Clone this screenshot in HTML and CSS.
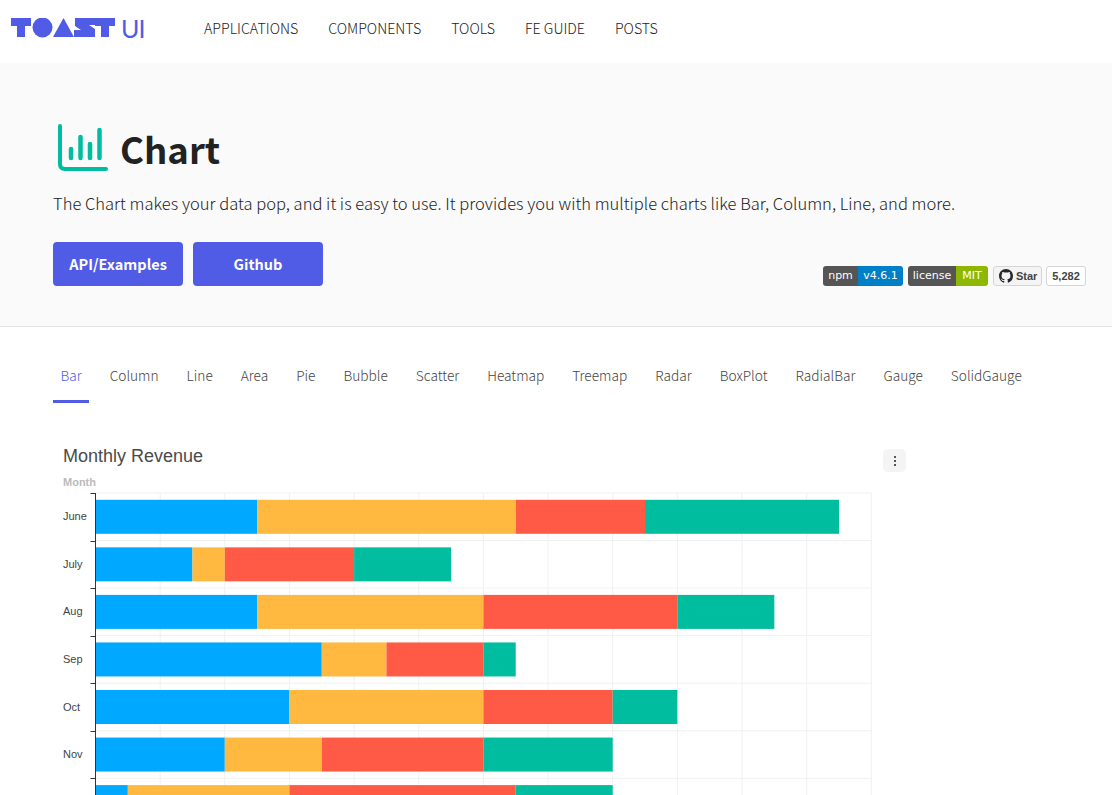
FILE: index.html
```html
<!DOCTYPE html>
<html>
<head>
	<meta charset="utf-8">
	<meta name="viewport" content="width=device-width, initial-scale=1">
	<title>TOAST UI Chart</title>
	<link rel="stylesheet" href="styles.css">
</head>
<body>
	<!-- Header -->
	<header class="header">
		<a class="logo" href="#">
			<svg class="logo-mark" width="105" height="20" viewBox="0 0 105 20">
				<path d="M0 0H20V8H14V19H6V8H0Z"/>
				<circle cx="31.5" cy="9.5" r="10"/>
				<path d="M42 19L52.5 0L63 19Z"/>
				<path d="M64 0H84V7H78L84 11V19H63V12H70L64 8Z"/>
				<path d="M84 0H104V8H98V19H90V8H84Z"/>
			</svg>
			<span class="logo-ui">UI</span>
		</a>
		<nav class="nav">
			<a href="#">APPLICATIONS</a>
			<a href="#">COMPONENTS</a>
			<a href="#">TOOLS</a>
			<a href="#">FE GUIDE</a>
			<a href="#">POSTS</a>
		</nav>
	</header>

	<!-- Hero -->
	<section class="hero">
		<div class="hero-title">
			<svg class="hero-icon" width="52" height="50" viewBox="0 0 52 50" fill="none" stroke="#00bd9f" stroke-linecap="round">
				<path d="M3 3V41Q3 46 8 46H49" stroke-width="4"/>
				<path d="M14 26V35M23.5 14V35M33 21V35M42.5 7V35" stroke-width="4.5"/>
			</svg>
			<h1>Chart</h1>
		</div>
		<p class="hero-desc">The Chart makes your data pop, and it is easy to use. It provides you with multiple charts like Bar, Column, Line, and more.</p>
		<div class="hero-bottom">
			<div class="hero-btns">
				<a class="btn" href="#">API/Examples</a>
				<a class="btn" href="#">Github</a>
			</div>
			<div class="badges">
				<span class="badge"><span class="badge-key key-npm">npm</span><span class="badge-val blue">v4.6.1</span></span>
				<span class="badge"><span class="badge-key key-license">license</span><span class="badge-val green">MIT</span></span>
				<span class="star-btn">
					<svg width="14" height="14" viewBox="0 0 16 16"><path fill="#24292e" d="M8 0C3.58 0 0 3.58 0 8c0 3.54 2.29 6.53 5.47 7.59.4.07.55-.17.55-.38 0-.19-.01-.82-.01-1.49-2.01.37-2.53-.49-2.69-.94-.09-.23-.48-.94-.82-1.13-.28-.15-.68-.52-.01-.53.63-.01 1.08.58 1.23.82.72 1.21 1.87.87 2.33.66.07-.52.28-.87.51-1.07-1.78-.2-3.64-.89-3.64-3.95 0-.87.31-1.59.82-2.15-.08-.2-.36-1.02.08-2.12 0 0 .67-.21 2.2.82.64-.18 1.32-.27 2-.27s1.36.09 2 .27c1.53-1.04 2.2-.82 2.2-.82.44 1.1.16 1.92.08 2.12.51.56.82 1.27.82 2.15 0 3.07-1.87 3.75-3.65 3.95.29.25.54.73.54 1.48 0 1.07-.01 1.93-.01 2.2 0 .21.15.46.55.38A8.01 8.01 0 0 0 16 8c0-4.42-3.58-8-8-8z"/></svg>
					Star
				</span>
				<span class="star-count">5,282</span>
			</div>
		</div>
	</section>

	<!-- Tabs -->
	<ul class="tabs">
		<li class="tab active">Bar</li>
		<li class="tab">Column</li>
		<li class="tab">Line</li>
		<li class="tab">Area</li>
		<li class="tab">Pie</li>
		<li class="tab">Bubble</li>
		<li class="tab">Scatter</li>
		<li class="tab">Heatmap</li>
		<li class="tab">Treemap</li>
		<li class="tab">Radar</li>
		<li class="tab">BoxPlot</li>
		<li class="tab">RadialBar</li>
		<li class="tab">Gauge</li>
		<li class="tab">SolidGauge</li>
	</ul>

	<!-- Chart -->
	<section class="chart">
		<div class="chart-head">
			<h2 class="chart-title">Monthly Revenue</h2>
			<button class="chart-menu"><i></i><i></i><i></i></button>
		</div>
		<svg id="plot" class="plot" width="830" height="340" viewBox="0 0 830 340"></svg>
	</section>

	<script src="chart.js"></script>
</body>
</html>
```

FILE: styles.css
```css
* {
	box-sizing: border-box;
}

html, body {
	height: 100%;
	overflow: hidden;
}

body {
	margin: 0;
	background: #fff;
	color: #222;
	font-family: "Noto Sans CJK KR", "Noto Sans", sans-serif;
}

a {
	color: inherit;
	text-decoration: none;
}

/* Header */
.header {
	display: flex;
	align-items: center;
	height: 63px;
	padding: 0 0 7px 11px;
}

.logo {
	display: flex;
	align-items: center;
	width: 193px;
}

.logo-mark {
	fill: #515ce6;
}

.logo-ui {
	margin-left: 5px;
	color: #515ce6;
	font-family: "Lato", sans-serif;
	font-size: 25px;
	letter-spacing: -1px;
	line-height: 20px;
}

.nav {
	display: flex;
	gap: 30px;
	font-size: 14.2px;
	font-weight: 300;
	color: #222;
}

/* Hero */
.hero {
	height: 264px;
	padding: 60px 26px 0 53px;
	background: #fafafa;
	border-bottom: 1px solid #e4e4e4;
}

.hero-title {
	display: flex;
	align-items: center;
	gap: 11px;
	height: 50px;
	padding-left: 4px;
}

.hero-title h1 {
	margin: 2px 0 0;
	font-size: 36.5px;
	font-weight: 700;
	line-height: 50px;
	color: #222;
}

.hero-desc {
	margin: 18px 0 0;
	font-size: 16.5px;
	font-weight: 300;
	letter-spacing: 0.02px;
	line-height: 24px;
	color: #222;
}

.hero-bottom {
	display: flex;
	justify-content: space-between;
	align-items: flex-end;
	margin-top: 27px;
}

.hero-btns {
	display: flex;
	gap: 10px;
}

.btn {
	width: 130px;
	height: 44px;
	background: #515ce6;
	border-radius: 4px;
	color: #fff;
	font-size: 14.5px;
	font-weight: 700;
	line-height: 44px;
	text-align: center;
}

.badges {
	display: flex;
	gap: 5px;
	height: 20px;
	font-family: "DejaVu Sans", sans-serif;
	font-size: 11px;
	line-height: 20px;
}

.badge {
	display: flex;
	width: 80px;
	border-radius: 3px;
	overflow: hidden;
	color: #fff;
	text-align: center;
}

.badge-key {
	background: #555;
}

.key-npm {
	width: 35px;
}

.key-license {
	width: 48px;
}

.badge-val {
	flex: 1;
}

.blue {
	background: #007ec6;
}

.green {
	background: #8eb800;
}

.star-btn, .star-count {
	display: flex;
	align-items: center;
	border: 1px solid #d5d5d5;
	border-radius: 3px;
	color: #444;
	font-family: "Liberation Sans", sans-serif;
	font-weight: 700;
}

.star-btn {
	gap: 3px;
	width: 49px;
	padding-left: 5px;
	background: #f4f4f4;
}

.star-count {
	justify-content: center;
	width: 40px;
	margin-left: -1px;
	background: #fff;
}

/* Tabs */
.tabs {
	display: flex;
	gap: 13px;
	margin: 22px 0 0 53px;
	padding: 0;
	list-style: none;
}

.tab {
	height: 54px;
	padding: 0 7.5px;
	font-size: 13.7px;
	font-weight: 300;
	line-height: 52px;
	color: #444;
}

.tab.active {
	color: #515ce6;
	border-bottom: 3px solid #515ce6;
}

/* Chart */
.chart {
	margin: 41px 0 0 53px;
}

.chart-head {
	display: flex;
	justify-content: space-between;
	align-items: flex-start;
	width: 853px;
	height: 24px;
	padding-left: 10px;
}

.chart-title {
	margin: 0;
	font-family: "Liberation Sans", Arial, sans-serif;
	font-size: 18px;
	font-weight: 400;
	line-height: 24px;
	color: #4a4a4a;
}

.chart-menu {
	display: flex;
	flex-direction: column;
	justify-content: center;
	align-items: center;
	flex-shrink: 0;
	gap: 2px;
	width: 23px;
	height: 23px;
	margin-top: 5px;
	padding: 0;
	background: #f4f4f4;
	border: 0;
	border-radius: 5px;
}

.chart-menu i {
	width: 2px;
	height: 2px;
	background: #555;
}

.plot {
	display: block;
	margin-top: 1px;
	font-family: "Liberation Sans", Arial, sans-serif;
}

.axis-name {
	font-size: 11px;
	font-weight: 700;
	fill: #bbb;
}

.axis-label {
	font-size: 11px;
	fill: #444;
}
```

FILE: chart.js
```js
/* Bar values in grid steps: blue, orange, red, green */
const months = [
	{name: 'June', vals: [2.5, 4, 2, 3]},
	{name: 'July', vals: [1.5, 0.5, 2, 1.5]},
	{name: 'Aug', vals: [2.5, 3.5, 3, 1.5]},
	{name: 'Sep', vals: [3.5, 1, 1.5, 0.5]},
	{name: 'Oct', vals: [3, 3, 2, 1]},
	{name: 'Nov', vals: [2, 1.5, 2.5, 2]},
	{name: 'Dec', vals: [0.5, 2.5, 3.5, 1.5]},
];
const colors = ['#00a9ff', '#ffb840', '#ff5a46', '#00bd9f'];

const plot = document.querySelector('#plot');
const axisX = 42.5, plotY = 24, step = 64.65, rowH = 47.55, barH = 34;
const plotEnd = 340;
let html = '<text class="axis-name" x="10" y="17">Month</text>';

/* Grid */
for (let i = 1; i <= 12; i++) {
	let x = axisX + step * i;
	html += `<line x1="${x}" x2="${x}" y1="${plotY}" y2="${plotEnd}" stroke="#f0f0f0"/>`;
}
for (let i = 0; i <= 6; i++) {
	let y = plotY + rowH * i;
	html += `<line x1="${axisX}" x2="${axisX + step * 12}" y1="${y}" y2="${y}" stroke="#f0f0f0"/>`;
}

/* Bars */
months.forEach(function(month, i) {
	let y = plotY + rowH * i + 6.8;
	let x = axisX;
	month.vals.forEach(function(val, j) {
		let w = val * step;
		html += `<rect x="${x}" y="${y}" width="${w}" height="${barH}" fill="${colors[j]}"/>`;
		x += w;
	});
	if (i < 6) {
		html += `<text class="axis-label" x="10" y="${y + 20.5}">${month.name}</text>`;
	}
});

/* Axis */
html += `<line x1="${axisX}" x2="${axisX}" y1="${plotY}" y2="${plotEnd}" stroke="#333"/>`;
for (let i = 0; i <= 6; i++) {
	let y = Math.round(plotY + rowH * i) + 0.5;
	html += `<line x1="${axisX - 5}" x2="${axisX}" y1="${y}" y2="${y}" stroke="#333"/>`;
}

plot.innerHTML = html;
```
